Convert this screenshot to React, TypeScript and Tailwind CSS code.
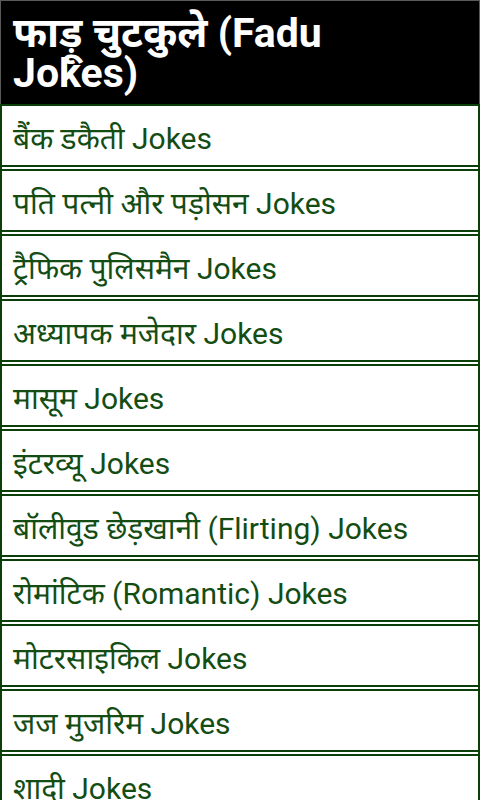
const jokes = [
  "बैंक डकैती Jokes",
  "पति पत्नी और पड़ोसन Jokes",
  "ट्रैफिक पुलिसमैन Jokes",
  "अध्यापक मजेदार Jokes",
  "मासूम Jokes",
  "इंटरव्यू Jokes",
  "बॉलीवुड छेड़खानी (Flirting) Jokes",
  "रोमांटिक (Romantic) Jokes",
  "मोटरसाइकिल Jokes",
  "जज मुजरिम Jokes",
  "शादी Jokes",
  "दोस्ती Jokes",
];

export default function App() {
  return (
    <div
      className="w-[480px] h-[800px] overflow-hidden bg-white"
      style={{ fontFamily: "Roboto, 'Noto Sans', sans-serif" }}
    >
      {/* Header */}
      <div className="bg-black border-t border-x border-[#5a5a5a] h-[104px] px-[12px] pt-[12px]">
        <h1 className="text-white font-bold text-[41px] leading-[40px]">
          फाड़ू चुटकुले (Fadu
          <br />
          Jokes)
        </h1>
      </div>

      {/* List */}
      <div className="border-x-2 border-t-2 border-[#0a3f0a]">
        {jokes.map((j) => (
          <div
            key={j}
            className="h-[65px] flex items-center px-[11px] pt-[6px] border-b-[6px] border-double border-[#0a3f0a]"
          >
            <span className="text-[#134d13] text-[30px] leading-none whitespace-nowrap">{j}</span>
          </div>
        ))}
      </div>
    </div>
  );
}
